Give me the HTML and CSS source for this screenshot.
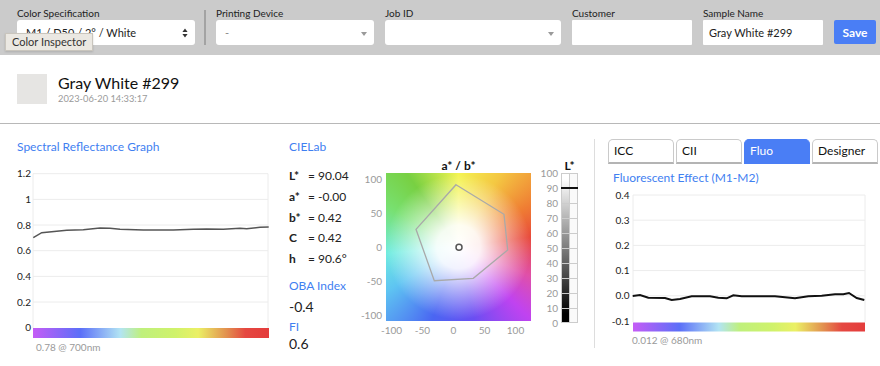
FILE: index.html
```html
<!DOCTYPE html>
<html>
<head>
    <title>Color Inspector</title>
    <link rel="stylesheet" href="styles.css">
</head>
<body>

<div class="toolbar">
  <div class="field spec">
    <label>Color Specification</label>
    <div class="select updown">M1 / D50 / 2° / White
      <svg class="updown-icon" width="6" height="10" viewBox="0 0 6 10">
        <path d="M3 0.5 L5.6 4 L0.4 4 Z M3 9.5 L5.6 6 L0.4 6 Z" fill="#333"/>
      </svg>
    </div>
    <div class="tooltip">Color Inspector</div>
  </div>
  <div class="toolbar-sep"></div>
  <div class="field device">
    <label>Printing Device</label>
    <div class="select arrow"><span class="muted">-</span></div>
  </div>
  <div class="field job">
    <label>Job ID</label>
    <div class="select arrow"></div>
  </div>
  <div class="field customer">
    <label>Customer</label>
    <div class="input"></div>
  </div>
  <div class="field sample">
    <label>Sample Name</label>
    <div class="input">Gray White #299</div>
  </div>
  <button class="save">Save</button>
</div>

<div class="sample-head">
  <div class="swatch"></div>
  <div>
    <div class="sample-name">Gray White #299</div>
    <div class="sample-date">2023-06-20 14:33:17</div>
  </div>
</div>

<div class="panels">

  <section class="panel spectral">
    <h2>Spectral Reflectance Graph</h2>
    <svg class="chart" width="256" height="200" viewBox="17 154 256 200">
      <defs>
        <linearGradient id="spectrum">
          <stop offset="0" stop-color="#c55cf6"/>
          <stop offset="0.2" stop-color="#5b6ff8"/>
          <stop offset="0.37" stop-color="#b2e4f3"/>
          <stop offset="0.46" stop-color="#bff07c"/>
          <stop offset="0.6" stop-color="#cff26b"/>
          <stop offset="0.7" stop-color="#ebf065"/>
          <stop offset="0.82" stop-color="#e2904f"/>
          <stop offset="0.9" stop-color="#e54841"/>
          <stop offset="1" stop-color="#e43c3c"/>
        </linearGradient>
      </defs>
      <g class="grid">
        <line x1="33" y1="172.7" x2="268" y2="172.7"/>
        <line x1="33" y1="198.4" x2="268" y2="198.4"/>
        <line x1="33" y1="224" x2="268" y2="224"/>
        <line x1="33" y1="249.7" x2="268" y2="249.7"/>
        <line x1="33" y1="275.4" x2="268" y2="275.4"/>
        <line x1="33" y1="301" x2="268" y2="301"/>
        <line x1="33" y1="172.7" x2="33" y2="327"/>
        <line x1="268" y1="172.7" x2="268" y2="327"/>
      </g>
      <g class="axis" text-anchor="end">
        <text x="31" y="172.7" dy="0.35em">1.2</text>
        <text x="31" y="198.4" dy="0.35em">1</text>
        <text x="31" y="224" dy="0.35em">0.8</text>
        <text x="31" y="249.7" dy="0.35em">0.6</text>
        <text x="31" y="275.4" dy="0.35em">0.4</text>
        <text x="31" y="301" dy="0.35em">0.2</text>
        <text x="31" y="326.7" dy="0.35em">0</text>
      </g>
      <polyline class="curve" points="33.3,236.7 41.7,231.7 66.7,229.3 83.3,228.7 100,227 110,227.3 120,228.3 143.3,229 173.3,229 193.3,228.3 206.7,228 223.3,228.3 240,227.3 246.7,227.7 260,226.3 268.7,226"/>
      <rect x="33" y="327" width="236" height="10" fill="url(#spectrum)"/>
      <text class="caption" x="36" y="346" dy="0.35em">0.78 @ 700nm</text>
    </svg>
  </section>

  <section class="panel lab">
    <div class="lab-values">
      <h2>CIELab</h2>
      <div class="lab-rows">
        <div class="lab-row"><b>L*</b><span>= 90.04</span></div>
        <div class="lab-row"><b>a*</b><span>= -0.00</span></div>
        <div class="lab-row"><b>b*</b><span>= 0.42</span></div>
        <div class="lab-row"><b>C</b><span>= 0.42</span></div>
        <div class="lab-row"><b>h</b><span>= 90.6°</span></div>
      </div>
      <h2 class="oba">OBA Index</h2>
      <div class="big-value">-0.4</div>
      <h2 class="fi">FI</h2>
      <div class="big-value last">0.6</div>
    </div>

    <div class="ab-chart">
      <div class="ab-title">a* / b*</div>
      <div class="l-title">L*</div>
      <div class="ab-ylabels">
        <span>100</span><span>50</span><span>0</span><span>-50</span><span>-100</span>
      </div>
      <div class="ab-plot">
        <svg width="145" height="148" viewBox="0 0 145 148">
          <polygon class="gamut" points="70,11.7 118,41.3 121.7,77 87.3,105.3 48.3,107.7 30,56.3"/>
          <circle class="sample-dot" cx="73" cy="74.3" r="3"/>
        </svg>
      </div>
      <div class="l-labels">
        <span>100</span><span>90</span><span>80</span><span>70</span><span>60</span><span>50</span>
        <span>40</span><span>30</span><span>20</span><span>10</span><span>0</span>
      </div>
      <div class="lbar"></div>
      <div class="ab-xlabels">
        <span>-100</span><span>-50</span><span>0</span><span>50</span><span>100</span>
      </div>
    </div>
  </section>

  <section class="panel fluo">
    <div class="tabs">
      <div class="tab">ICC</div>
      <div class="tab">CII</div>
      <div class="tab active">Fluo</div>
      <div class="tab">Designer</div>
      <div class="tab"></div>
    </div>
    <h2>Fluorescent Effect (M1-M2)</h2>
    <svg class="chart" width="271" height="162" viewBox="609 185 271 162">
      <g class="grid">
        <line x1="633" y1="194" x2="865" y2="194"/>
        <line x1="633" y1="219.2" x2="865" y2="219.2"/>
        <line x1="633" y1="244.4" x2="865" y2="244.4"/>
        <line x1="633" y1="269.6" x2="865" y2="269.6"/>
        <line x1="633" y1="294.8" x2="865" y2="294.8"/>
        <line x1="633" y1="194" x2="633" y2="321"/>
        <line x1="865" y1="194" x2="865" y2="321"/>
      </g>
      <g class="axis" text-anchor="end">
        <text x="629.5" y="194" dy="0.35em">0.4</text>
        <text x="629.5" y="219.2" dy="0.35em">0.3</text>
        <text x="629.5" y="244.4" dy="0.35em">0.2</text>
        <text x="629.5" y="269.6" dy="0.35em">0.1</text>
        <text x="629.5" y="294.8" dy="0.35em">0.0</text>
        <text x="629.5" y="320" dy="0.35em">-0.1</text>
      </g>
      <polyline class="curve dark" points="632.7,295 640,294 648.3,296.7 665,297 671.7,299 680,298 691.7,295.3 710,295.3 718.3,296.7 726.7,297.3 733.3,294.3 741.7,295.3 775,295.3 795,297.3 808.3,295.3 821.7,294.7 835,293.3 843.3,293.3 849,292 856.7,297 864.3,299"/>
      <rect x="633" y="321.5" width="232" height="9" fill="url(#spectrum)"/>
      <text class="caption" x="632" y="339.5" dy="0.35em">0.012 @ 680nm</text>
    </svg>
  </section>

</div>

</body>
</html>
```

FILE: styles.css
```css
html, body {
  height: 100%;
  margin: 0;
  overflow: hidden;
}
body {
  font-family: Lato, "Open Sans", sans-serif;
  color: #222;
  background: #fff;
}
h2 {
  margin: 0;
  font-size: 12px;
  font-weight: normal;
  line-height: 16px;
  color: #3f80f1;
}

/*** TOOLBAR ***/

.toolbar {
  display: flex;
  align-items: flex-start;
  gap: 11px;
  height: 55px;
  box-sizing: border-box;
  padding: 6px 0 0 17px;
  background: #cbcbcb;
}
.field {
  position: relative;
  display: flex;
  flex-direction: column;
}
.field label {
  font-size: 10px;
  line-height: 14px;
  color: #222;
}
.select, .input {
  position: relative;
  box-sizing: border-box;
  height: 25px;
  padding-left: 9px;
  background: #fff;
  border-radius: 3px;
  font-size: 11px;
  line-height: 25px;
}
.input {
  padding-left: 6px;
  border-radius: 1px;
}
.spec .select { width: 178px; }
.device .select { width: 158px; }
.job .select { width: 176px; }
.customer .input { width: 120px; }
.sample .input { width: 120px; }
.muted {
  color: #888;
}
.arrow::after {
  content: "";
  position: absolute;
  right: 7px;
  top: 12px;
  border-left: 3.5px solid transparent;
  border-right: 3.5px solid transparent;
  border-top: 4px solid #9a9a9a;
}
.updown-icon {
  position: absolute;
  right: 7px;
  top: 8px;
}
.toolbar-sep {
  width: 2px;
  height: 35px;
  margin: 4px -1px 0 -2px;
  background: #a3a3a3;
}
.tooltip {
  position: absolute;
  left: -12px;
  top: 27px;
  height: 18px;
  box-sizing: border-box;
  padding: 0 6px;
  background: #ebe8e2;
  border: 1px solid #c9c5bd;
  box-shadow: 0 1px 2px rgba(0, 0, 0, 0.15);
  font-size: 11px;
  line-height: 16px;
  color: #333;
  white-space: nowrap;
}
.save {
  width: 42px;
  height: 24px;
  margin-top: 14px;
  padding: 0;
  border: 0;
  border-radius: 2px;
  background: #4a7ef5;
  color: #fff;
  font: bold 12px Lato, sans-serif;
}

/*** SAMPLE HEADER ***/

.sample-head {
  display: flex;
  gap: 11px;
  padding: 19px 17px 18px;
  border-bottom: 1px solid #b8b8b8;
}
.swatch {
  width: 30px;
  height: 30px;
  background: #e6e5e3;
}
.sample-name {
  font-size: 16px;
  line-height: 17px;
  color: #111;
}
.sample-date {
  margin-top: 2px;
  font-size: 9.3px;
  line-height: 12px;
  color: #9a9a9a;
}

/*** PANELS ***/

.panels {
  display: flex;
}
.panel {
  flex: none;
  box-sizing: border-box;
  padding-top: 15px;
}
.spectral {
  width: 289px;
  padding-left: 17px;
}
.chart {
  display: block;
}
.grid line {
  stroke: #ececec;
  stroke-width: 1;
}
.axis text {
  font: 10px Lato, sans-serif;
  fill: #222;
}
.caption {
  font: 10px Lato, sans-serif;
  fill: #9a9a9a;
}
.curve {
  fill: none;
  stroke: #555;
  stroke-width: 1.5;
}
.curve.dark {
  stroke: #111;
  stroke-width: 2;
}

/* CIELab */

.lab {
  display: flex;
  width: 305px;
}
.lab-values {
  width: 66px;
  flex: none;
}
.lab-rows {
  margin-top: 11px;
}
.lab-row {
  display: flex;
  font-size: 12px;
  line-height: 20.75px;
}
.lab-row b {
  width: 19px;
}
.oba {
  margin-top: 8px;
}
.big-value {
  margin-top: 4px;
  font-size: 14px;
  line-height: 18px;
}
.fi {
  margin-top: 3px;
}
.big-value.last {
  margin-top: 0;
}

.ab-chart {
  display: grid;
  grid-template-columns: 31px 145px 27px 3px 17px;
  grid-template-rows: 15px 150px 16px;
  margin-top: 19px;
  font-size: 10px;
  color: #999;
}
.ab-title, .l-title {
  font-size: 12px;
  font-weight: bold;
  line-height: 15px;
  color: #111;
  text-align: center;
}
.ab-title { grid-column: 2; }
.l-title { grid-column: 5; }
.ab-ylabels {
  grid-column: 1;
  height: 148px;
  display: flex;
  flex-direction: column;
  justify-content: space-between;
  padding-right: 4px;
  text-align: right;
  line-height: 12px;
}
.ab-plot {
  grid-column: 2;
  height: 148px;
  background:
    radial-gradient(circle closest-side, #fff 0%, rgba(255,255,255,.92) 30%, rgba(255,255,255,.45) 65%, rgba(255,255,255,0) 100%),
    conic-gradient(#f4f452 0deg, #f4c742 30deg, #ef7c33 60deg, #e84a3b 82deg, #e050a8 112deg, #c043f0 135deg, #6a4ef2 168deg, #4a66f2 200deg, #5ec4f2 238deg, #70ece0 265deg, #78e070 300deg, #78d042 325deg, #f4f452 360deg);
}
.ab-plot svg {
  display: block;
}
.gamut {
  fill: none;
  stroke: #a9a9a9;
  stroke-width: 1.3;
}
.sample-dot {
  fill: #fff;
  stroke: #555;
  stroke-width: 1.5;
}
.l-labels {
  grid-column: 3;
  grid-row: 2;
  align-self: start;
  margin-top: -7.5px;
  display: flex;
  flex-direction: column;
  text-align: right;
  line-height: 15px;
}
.lbar {
  grid-column: 5;
  grid-row: 2;
  position: relative;
  height: 150px;
  background:
    repeating-linear-gradient(to bottom, #ccc 0 1px, transparent 1px 15px),
    linear-gradient(to right, transparent 8px, #ccc 8px 9px, #fafafa 9px),
    linear-gradient(to bottom, #fff 4%, #000 94%);
  box-shadow: inset 0 0 0 1px #ccc;
}
.lbar::after {
  content: "";
  position: absolute;
  left: 0;
  right: 0;
  top: 14px;
  height: 2px;
  background: #111;
}
.ab-xlabels {
  grid-column: 1 / 3;
  grid-row: 3;
  display: flex;
  margin-left: 21px;
  line-height: 14px;
}
.ab-xlabels span {
  width: 33.1px;
  text-align: center;
}

/* Fluo */

.fluo {
  width: 290px;
  height: 209px;
  margin-top: 15px;
  padding: 0 0 0 14px;
  border-left: 1px solid #ddd;
}
.tabs {
  display: flex;
  gap: 2px;
  margin-left: -1px;
}
.tab {
  flex: none;
  width: 66px;
  height: 25px;
  box-sizing: border-box;
  padding-left: 5px;
  border: 1px solid #cacaca;
  border-bottom: 2px solid #b4b4b4;
  border-radius: 5px 5px 0 0;
  font-size: 12px;
  line-height: 22px;
  color: #111;
}
.tab.active {
  background: #4a7ef5;
  border-color: #4a7ef5;
  color: #fff;
}
.fluo h2 {
  margin: 6px 0 0 4px;
}
```
